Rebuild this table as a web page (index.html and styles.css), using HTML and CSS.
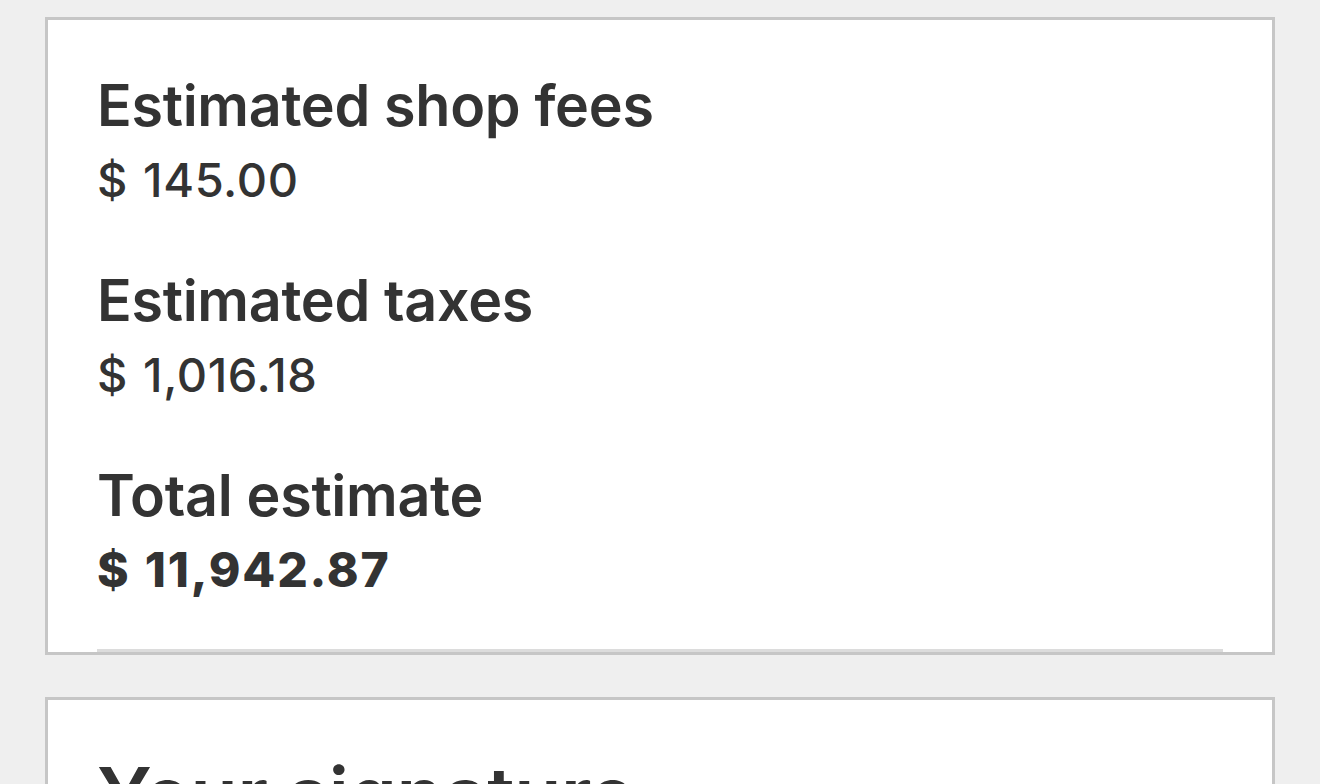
FILE: index.html
```html
<!DOCTYPE html>
<html lang="en">
<head>
<meta charset="utf-8">
<title>Estimate</title>
<link rel="stylesheet" href="styles.css">
</head>
<body>
<main class="page">
  <section class="card summary">
    <div class="item">
      <h2 class="label">Estimated shop fees</h2>
      <p class="value">$ 145.00</p>
    </div>
    <div class="item">
      <h2 class="label">Estimated taxes</h2>
      <p class="value">$ 1,016.18</p>
    </div>
    <div class="item">
      <h2 class="label">Total estimate</h2>
      <p class="value total">$ 11,942.87</p>
    </div>
    <hr class="divider">
  </section>
  <section class="card signature">
    <h2 class="sig-title">Your signature</h2>
  </section>
</main>
</body>
</html>
```
FILE: styles.css
```css
* { box-sizing: border-box; }
html, body { margin: 0; padding: 0; }
body {
  background: #efefef;
  font-family: Inter, "Noto Sans", "Liberation Sans", sans-serif;
  color: #333333;
  height: 784px;
  overflow: hidden;
}
.page {
  padding: 17px 45px 0 45px;
  display: flex;
  flex-direction: column;
  gap: 42px;
}
.card {
  background: #ffffff;
  border: 3px solid #c6c6c6;
}
.summary {
  padding: 50px 49px 0 49px;
  display: flex;
  flex-direction: column;
}
.label {
  margin: 0;
  font-size: 57.4px;
  font-weight: 600;
  line-height: 70px;
  letter-spacing: -0.3px;
}
.value {
  margin: 2px 0 48px 0;
  font-size: 47px;
  font-weight: 500;
  line-height: 75px;
  letter-spacing: 0.6px;
  word-spacing: 2px;
}
.value.total {
  font-size: 48px;
  font-weight: 800;
  letter-spacing: 1.8px;
  margin-bottom: 42px;
}
.divider {
  margin: 0;
  border: 0;
  height: 3px;
  background: #dcdcdc;
}
.signature {
  padding: 50px 49px;
  height: 200px;
}
.sig-title {
  margin: 0;
  font-size: 77px;
  font-weight: 600;
  line-height: 90px;
  letter-spacing: -0.3px;
}
```
